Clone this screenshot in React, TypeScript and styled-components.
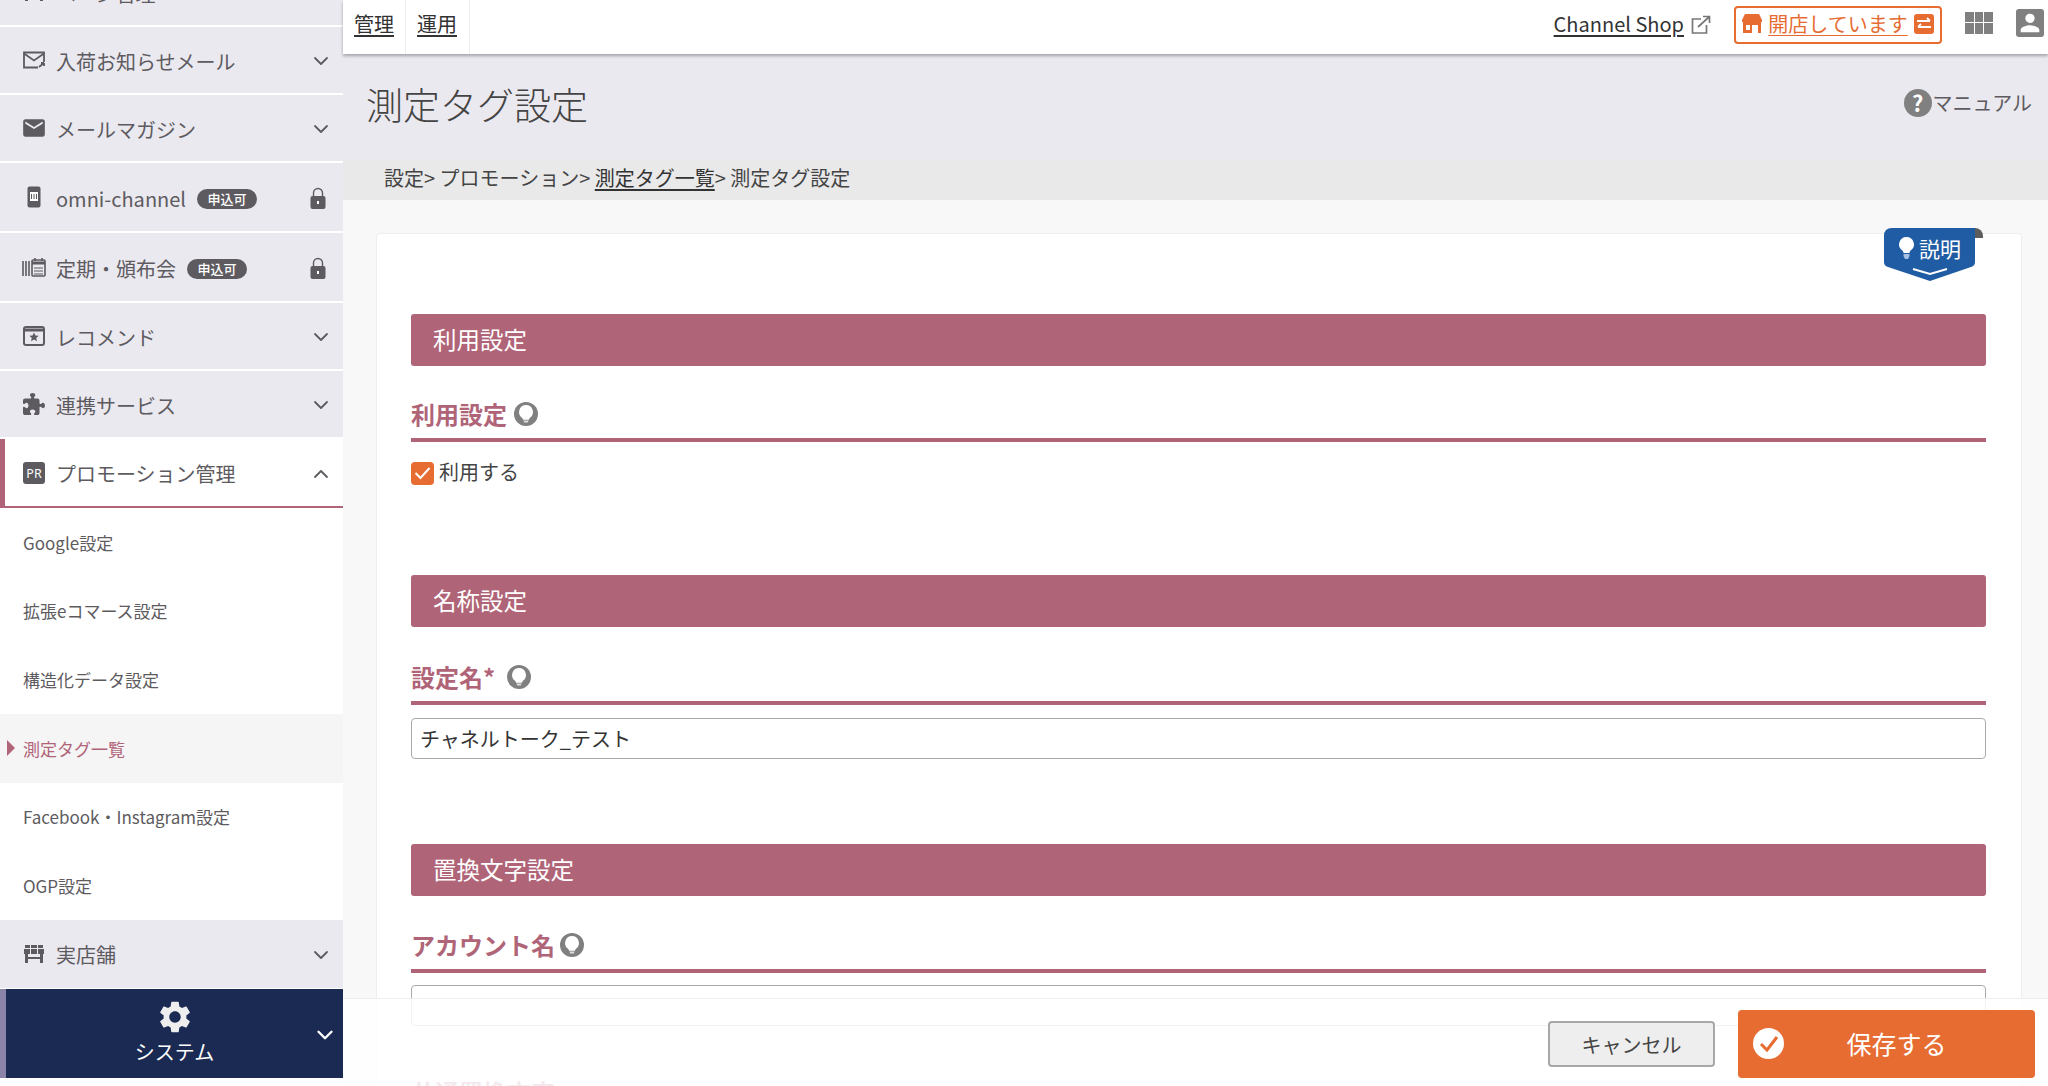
import { ReactNode } from "react";
import styled, { createGlobalStyle } from "styled-components";
import { ChevronDown, ChevronUp } from "lucide-react";
import { FaPuzzlePiece } from "react-icons/fa6";
import { MdEmail, MdPerson, MdSettings } from "react-icons/md";

const PINK = "#b06478";
const ORANGE = "#e66c32";
const GREY = "#5d5b60";
const LILAC = "#ebe9f0";

const GlobalStyle = createGlobalStyle`
	html, body {
		margin: 0;
		padding: 0;
		background: #fff;
		font-family: "Noto Sans CJK JP", "Noto Sans", sans-serif;
		color: #333;
	}
	* {
		box-sizing: border-box;
	}
`;

const Page = styled.div`
	position: relative;
	display: flex;
	height: 100vh;
	overflow: hidden;
`;

const Sidebar = styled.nav`
	flex: 0 0 343px;
	margin-top: -41px;
	display: flex;
	flex-direction: column;
`;

const MenuRow = styled.div<{ $h: number }>`
	height: ${(props) => props.$h}px;
	flex: none;
	display: flex;
	align-items: center;
	padding: 2px 10px 0 23px;
	background: ${LILAC};
	border-bottom: 2px solid #fff;
	color: ${GREY};
	font-size: 20px;
`;

const OpenRow = styled(MenuRow)`
	background: #fff;
	border-left: 5px solid ${PINK};
	border-bottom: 2px solid ${PINK};
	padding-left: 18px;
`;

const LastRow = styled(MenuRow)`
	border-bottom: none;
`;

const MenuIcon = styled.span`
	flex: 0 0 24px;
	min-width: 0;
	height: 24px;
	margin: -2px 10px 0 -1px;
	display: flex;
	align-items: center;
	justify-content: center;
	color: ${GREY};

	svg {
		flex: none;
	}
`;

const MenuLabel = styled.span`
	white-space: nowrap;
`;

const Badge = styled.span`
	margin: 1px 0 0 11px;
	width: 60px;
	height: 20px;
	border-radius: 10px;
	background: ${GREY};
	color: #fff;
	font-size: 13px;
	font-weight: 500;
	line-height: 20px;
	text-align: center;
	white-space: nowrap;
`;

const RowEnd = styled.span`
	margin-left: auto;
	display: flex;
	align-items: center;
	color: ${GREY};
`;

const LockSlot = styled(RowEnd)`
	margin-right: 7px;
`;

const SubItem = styled.div<{ $active?: boolean }>`
	position: relative;
	height: 68.67px;
	flex: none;
	display: flex;
	align-items: center;
	padding-left: 23px;
	font-size: 17px;
	white-space: nowrap;
	background: ${(props) => (props.$active ? "#f6f5f6" : "#fff")};
	color: ${(props) => (props.$active ? PINK : GREY)};

	${(props) => props.$active && `
		&::before {
			content: "";
			position: absolute;
			left: 7px;
			top: 26px;
			border-left: 8px solid ${PINK};
			border-top: 8px solid transparent;
			border-bottom: 8px solid transparent;
		}
	`}
`;

const SystemRow = styled.div`
	position: relative;
	height: 89px;
	flex: none;
	margin-top: 1px;
	background: #1b2a52;
	border-left: 6px solid #8b84a8;
	color: #fff;
	display: flex;
	flex-direction: column;
	align-items: center;
	padding-top: 9px;
	font-size: 20px;
	line-height: 32px;
`;

const SystemChevron = styled.span`
	position: absolute;
	right: 5px;
	top: 33px;
	display: flex;
`;

const Main = styled.div`
	flex: 1;
	min-width: 0;
	display: flex;
	flex-direction: column;
	background: #f8f8f8;
`;

const Header = styled.header`
	flex: none;
	height: 54px;
	display: flex;
	align-items: center;
	background: #fff;
	box-shadow: 0 2px 3px rgba(0, 0, 0, 0.3);
	position: relative;
	padding-right: 4px;
`;

const Tab = styled.a<{ $w: number }>`
	height: 54px;
	width: ${(props) => props.$w}px;
	padding: 0 0 8px 11px;
	display: flex;
	align-items: center;
	border-right: 1px solid #eee;
	color: #333;
	font-size: 20px;
	text-decoration: underline;
	text-underline-offset: 3px;
`;

const HeaderRight = styled.div`
	margin-left: auto;
	padding-bottom: 5px;
	display: flex;
	align-items: center;
`;

const ShopLink = styled.a`
	font-size: 20px;
	color: #333;
	text-decoration: underline;
	text-underline-offset: 3px;
	margin: -2px 7px 0 0;
`;

const OpenButton = styled.div`
	width: 208px;
	height: 38px;
	margin-left: 23px;
	padding-bottom: 2px;
	border: 2px solid ${ORANGE};
	border-radius: 4px;
	display: flex;
	align-items: center;
	justify-content: center;
	gap: 6px;
	color: ${ORANGE};
	font-size: 20px;
	white-space: nowrap;

	span {
		text-decoration: underline;
		text-decoration-thickness: 1px;
		text-underline-offset: 3px;
	}
`;

const GridIcon = styled.div`
	width: 28px;
	height: 22px;
	margin: -4px 0 0 23px;
	display: grid;
	grid-template-columns: repeat(3, 1fr);
	grid-template-rows: repeat(2, 1fr);
	gap: 1px;

	i {
		background: #808080;
	}
`;

const UserIcon = styled.div`
	width: 28px;
	height: 28px;
	margin: -4px 0 0 23px;
	background: #808080;
	border-radius: 3px;
	display: flex;
	align-items: center;
	justify-content: center;
	color: #fff;
`;

const TitleBar = styled.div`
	flex: none;
	height: 106px;
	background: ${LILAC};
	display: flex;
	align-items: center;
	justify-content: space-between;
	padding: 0 16px 7px 23px;
`;

const PageTitle = styled.h1`
	margin: 0;
	font-size: 37px;
	font-weight: 200;
	color: #444;
`;

const ManualLink = styled.div`
	display: flex;
	align-items: center;
	font-size: 20px;
	color: ${GREY};
	margin-top: -2px;
`;

const QuestionMark = styled.span`
	width: 28px;
	height: 28px;
	border-radius: 50%;
	background: #808080;
	color: #fff;
	font-size: 22px;
	font-weight: 700;
	line-height: 27px;
	text-align: center;
	margin-right: 1px;
`;

const Breadcrumb = styled.div`
	flex: none;
	height: 40px;
	background: #e9e9ea;
	padding: 0 0 5px 41px;
	display: flex;
	align-items: center;
	font-size: 20px;
	color: #444;
	white-space: pre;

	a {
		color: #333;
		text-decoration: underline;
		text-underline-offset: 3px;
	}
`;

const Content = styled.div`
	padding: 33px 26px 0 33px;
`;

const Card = styled.section`
	position: relative;
	background: #fff;
	border: 1px solid #eee;
	border-radius: 4px;
	padding: 80px 35px 0 34px;
`;

const HelpTab = styled.div`
	position: absolute;
	top: -6px;
	right: 46px;
	width: 91px;
	height: 53px;
	color: #fff;
	font-size: 21px;

	&::before {
		content: "";
		position: absolute;
		right: -8px;
		top: 0;
		width: 14px;
		height: 10px;
		border-radius: 0 8px 0 0;
		background: #5c5c5c;
	}
`;

const HelpShape = styled.svg`
	position: absolute;
	inset: 0;
`;

const HelpText = styled.div`
	position: relative;
	display: flex;
	align-items: center;
	gap: 5px;
	padding: 5px 0 0 15px;
	line-height: 30px;
`;

const SectionBar = styled.div<{ $mb: number }>`
	height: 52px;
	background: ${PINK};
	border-radius: 3px;
	color: #fff;
	font-size: 23.5px;
	line-height: 50px;
	padding-left: 22px;
	margin-bottom: ${(props) => props.$mb}px;
`;

const FieldTitle = styled.div<{ $gap: number }>`
	height: 38px;
	display: flex;
	align-items: center;
	gap: ${(props) => props.$gap}px;
	border-bottom: 4px solid ${PINK};
	box-sizing: content-box;
	padding-bottom: 5px;
	color: ${PINK};
	font-size: 24px;
	font-weight: 700;

	span {
		margin-top: -2px;
	}
`;

const CheckRow = styled.label`
	display: flex;
	align-items: center;
	gap: 5px;
	margin-top: 19px;
	margin-bottom: 90px;
	font-size: 20px;
	color: #444;
	height: 24px;

	span + span {
		margin-top: -4px;
	}
`;

const CheckBox = styled.span`
	width: 23px;
	height: 23px;
	border-radius: 4px;
	background: ${ORANGE};
	display: flex;
	align-items: center;
	justify-content: center;
`;

const TextField = styled.input<{ $mt: number; $mb: number }>`
	display: block;
	width: 100%;
	height: 41px;
	margin-top: ${(props) => props.$mt}px;
	margin-bottom: ${(props) => props.$mb}px;
	border: 1px solid #aaa;
	border-radius: 4px;
	padding: 0 8px;
	font: inherit;
	font-size: 20px;
	color: #333;
`;

const Footer = styled.div`
	position: absolute;
	left: 343px;
	right: 0;
	top: 998px;
	bottom: 0;
	background: rgba(255, 255, 255, 0.86);
	border-top: 1px solid #eee;
	display: flex;
	justify-content: flex-end;
	align-items: flex-start;
	gap: 23px;
	padding: 11px 13px 0 0;
`;

const CancelButton = styled.button`
	width: 167px;
	height: 46px;
	margin-top: 11px;
	border: 2px solid #a8a8a8;
	border-radius: 4px;
	background: #eee;
	color: #444;
	font: inherit;
	font-size: 20px;
`;

const SaveButton = styled.button`
	position: relative;
	width: 297px;
	height: 68px;
	border: none;
	border-radius: 4px;
	background: ${ORANGE};
	color: #fff;
	font: inherit;
	font-size: 25px;
	padding: 0 0 2px 20px;
`;

const SaveMark = styled.span`
	position: absolute;
	left: 15px;
	top: 18px;
	width: 31px;
	height: 31px;
	border-radius: 50%;
	background: #fff;
	display: flex;
	align-items: center;
	justify-content: center;
`;

const FadedHeading = styled.div`
	font-size: 24px;
	font-weight: 700;
	color: ${PINK};
`;

function Outline({ size = 24, children }: { size?: number; children: ReactNode }): JSX.Element {
	return <svg width={size} height={size} viewBox="0 0 24 24" fill="none" stroke="currentColor" strokeWidth={1.8}>{children}</svg>;
}

function BulbBadge(): JSX.Element {
	return (
		<svg width="24" height="24" viewBox="0 0 24 24">
			<circle cx="12" cy="12" r="12" fill="#808080" />
			<path d="M12 3a7 7 0 0 0-4 12.700c.7.6 1 1.200 1 2h6c0-.8.3-1.400 1-2A7 7 0 0 0 12 3z" fill="#fff" />
			<path d="M9.500 18.500h5l-.7 2h-3.600z" fill="#ddd" />
		</svg>
	);
}

function MailOutIcon(): JSX.Element {
	return (
		<Outline>
			<path d="M22 14V4.500H2v15h14" />
			<path d="M2 5.500l10 7 10-7" />
			<path d="M17 19l5-4m0 0h-3m3 0v3" />
		</Outline>
	);
}

function PhoneIcon(): JSX.Element {
	return (
		<svg width="14" height="22" viewBox="0 0 14 22">
			<rect x="0.5" y="0.5" width="13" height="21" rx="2" fill={GREY} />
			<rect x="3" y="6" width="8" height="9" fill="#fff" />
			<path d="M4.500 8v5M7 8v5M9.500 8v5" stroke={GREY} />
		</svg>
	);
}

function CalendarIcon(): JSX.Element {
	return (
		<svg width="24" height="20" viewBox="0 0 24 20">
			<path d="M1 4v15M4 4v15M7 4v15" stroke={GREY} strokeWidth="1.6" />
			<rect x="10" y="3" width="13" height="16" rx="1" fill="none" stroke={GREY} strokeWidth="1.6" />
			<path d="M10 6h13" stroke={GREY} strokeWidth="3" />
			<path d="M13 1v3M20 1v3" stroke={GREY} strokeWidth="1.6" />
			<path d="M12 11h9M12 14h9M12 17h9" stroke={GREY} />
		</svg>
	);
}

function StarBoxIcon(): JSX.Element {
	return (
		<svg width="22" height="20" viewBox="0 0 22 20">
			<rect x="1" y="1" width="20" height="18" rx="2" fill="none" stroke={GREY} strokeWidth="2" />
			<path d="M1 4h20" stroke={GREY} strokeWidth="3" />
			<path d="M11 6.500l1.400 3 3.300.3-2.500 2.200.8 3.200-3-1.700-3 1.700.8-3.200-2.500-2.200 3.300-.3z" fill={GREY} />
		</svg>
	);
}

function PrIcon(): JSX.Element {
	return (
		<svg width="22" height="22" viewBox="0 0 22 22">
			<rect width="22" height="22" rx="3" fill={GREY} />
			<text x="11" y="16" textAnchor="middle" fill="#fff" fontSize="12.5" fontFamily="Noto Sans, sans-serif">PR</text>
		</svg>
	);
}

function ShopIcon(): JSX.Element {
	return (
		<svg width="22" height="20" viewBox="0 0 22 20" fill={GREY}>
			<path d="M2 1h18v3H2zM1 5h20v5H1z" />
			<path d="M7.500 1v9M14.500 1v9" stroke={LILAC} strokeWidth="1" />
			<path d="M2 10h3v9H2zM17 10h3v9h-3zM5 13h12v2H5z" />
		</svg>
	);
}

function LockIcon(): JSX.Element {
	return (
		<svg width="16" height="22" viewBox="0 0 16 22">
			<path d="M3.500 10V6a4.500 4.500 0 0 1 9 0v4" fill="none" stroke={GREY} strokeWidth="1.400" />
			<rect x="0.500" y="9" width="15" height="13" rx="2" fill={GREY} />
			<rect x="7" y="14" width="2" height="3" fill="#fff" />
		</svg>
	);
}

function OrangeStoreIcon(): JSX.Element {
	return (
		<svg width="20" height="19" viewBox="0 0 20 19" fill={ORANGE}>
			<path d="M3 0h14l3 6v2H0V6z" />
			<path d="M1 8h18v11h-3V11H10v8H1zM4 11v5h4v-5z" fillRule="evenodd" />
		</svg>
	);
}

function ExternalIcon(): JSX.Element {
	return (
		<svg width="20" height="20" viewBox="0 0 20 20" fill="none" stroke="#777" strokeWidth="1.7">
			<path d="M10 4H1.500v14h14v-8" />
			<path d="M7 12L18 2M12 1.500h6.500V8" />
		</svg>
	);
}

function SwapIcon(): JSX.Element {
	return (
		<svg width="20" height="20" viewBox="0 0 20 20">
			<rect width="20" height="20" rx="3" fill={ORANGE} />
			<path d="M3 7h13M13 4l3 3M17 13H4M7 10l-3 3" stroke="#fff" strokeWidth="1.800" fill="none" />
		</svg>
	);
}

function Chevron(): JSX.Element {
	return <ChevronDown size={24} strokeWidth={1.8} />;
}

function LockEnd(): JSX.Element {
	return <LockSlot><LockIcon /></LockSlot>;
}

const SUB_ITEMS = ["Google設定", "拡張eコマース設定", "構造化データ設定", "測定タグ一覧", "Facebook・Instagram設定", "OGP設定"];

function Navigation(): JSX.Element {
	return (
		<Sidebar>
			<MenuRow $h={68}><MenuIcon><ShopIcon /></MenuIcon><MenuLabel>ページ管理</MenuLabel></MenuRow>
			<MenuRow $h={68}><MenuIcon><MailOutIcon /></MenuIcon><MenuLabel>入荷お知らせメール</MenuLabel><RowEnd><Chevron /></RowEnd></MenuRow>
			<MenuRow $h={68}><MenuIcon><MdEmail size={26} /></MenuIcon><MenuLabel>メールマガジン</MenuLabel><RowEnd><Chevron /></RowEnd></MenuRow>
			<MenuRow $h={70}><MenuIcon><PhoneIcon /></MenuIcon><MenuLabel>omni-channel</MenuLabel><Badge>申込可</Badge><LockEnd /></MenuRow>
			<MenuRow $h={70}><MenuIcon><CalendarIcon /></MenuIcon><MenuLabel>定期・頒布会</MenuLabel><Badge>申込可</Badge><LockEnd /></MenuRow>
			<MenuRow $h={68}><MenuIcon><StarBoxIcon /></MenuIcon><MenuLabel>レコメンド</MenuLabel><RowEnd><Chevron /></RowEnd></MenuRow>
			<MenuRow $h={68}><MenuIcon><FaPuzzlePiece size={22} /></MenuIcon><MenuLabel>連携サービス</MenuLabel><RowEnd><Chevron /></RowEnd></MenuRow>
			<OpenRow $h={69}><MenuIcon><PrIcon /></MenuIcon><MenuLabel>プロモーション管理</MenuLabel><RowEnd><ChevronUp size={24} strokeWidth={1.8} /></RowEnd></OpenRow>
			{SUB_ITEMS.map((item) => <SubItem key={item} $active={item === "測定タグ一覧"}>{item}</SubItem>)}
			<LastRow $h={68}><MenuIcon><ShopIcon /></MenuIcon><MenuLabel>実店舗</MenuLabel><RowEnd><Chevron /></RowEnd></LastRow>
			<SystemRow>
				<MdSettings size={38} color="#eee" />
				システム
				<SystemChevron><ChevronDown size={26} strokeWidth={2.2} /></SystemChevron>
			</SystemRow>
		</Sidebar>
	);
}

export default function App(): JSX.Element {
	return (
		<Page>
			<GlobalStyle />
			<Navigation />
			<Main>
				<Header>
					<Tab $w={63}>管理</Tab>
					<Tab $w={64}>運用</Tab>
					<HeaderRight>
						<ShopLink>Channel Shop</ShopLink>
						<ExternalIcon />
						<OpenButton>
							<OrangeStoreIcon />
							<span>開店しています</span>
							<SwapIcon />
						</OpenButton>
						<GridIcon>{[0, 1, 2, 3, 4, 5].map((n) => <i key={n} />)}</GridIcon>
						<UserIcon><MdPerson size={28} /></UserIcon>
					</HeaderRight>
				</Header>
				<TitleBar>
					<PageTitle>測定タグ設定</PageTitle>
					<ManualLink><QuestionMark>?</QuestionMark>マニュアル</ManualLink>
				</TitleBar>
				<Breadcrumb>設定&gt; プロモーション&gt; <a>測定タグ一覧</a>&gt; 測定タグ設定</Breadcrumb>
				<Content>
					<Card>
						<HelpTab>
							<HelpShape width="91" height="53" viewBox="0 0 91 53">
								<path d="M8 0h83v34q0 4-4 5L46 53 4 39q-4-1-4-5V8q0-8 8-8z" fill="#1f5ca3" />
								<path d="M29 41l17 5 17-5" stroke="#fff" strokeWidth="2" fill="none" />
							</HelpShape>
							<HelpText>
								<svg width="15" height="22" viewBox="0 0 15 22">
									<path d="M7.500 0a7.500 7.500 0 0 0-4 13.800c.7.6 1 1.200 1 2.200h6c0-1 .3-1.600 1-2.200A7.500 7.500 0 0 0 7.500 0z" fill="#fff" />
									<path d="M4.500 17h6v2l-1.500 3h-3l-1.500-3z" fill="#a9c1e0" />
								</svg>
								説明
							</HelpText>
						</HelpTab>
						<SectionBar $mb={29}>利用設定</SectionBar>
						<FieldTitle $gap={7}><span>利用設定</span><BulbBadge /></FieldTitle>
						<CheckRow>
							<CheckBox>
								<svg width="17" height="14" viewBox="0 0 17 14"><path d="M1.500 7l5 5 9-10" stroke="#fff" strokeWidth="2" fill="none" /></svg>
							</CheckBox>
							<span>利用する</span>
						</CheckRow>
						<SectionBar $mb={31}>名称設定</SectionBar>
						<FieldTitle $gap={12}><span>設定名*</span><BulbBadge /></FieldTitle>
						<TextField $mt={13} $mb={85} defaultValue="チャネルトーク_テスト" />
						<SectionBar $mb={30}>置換文字設定</SectionBar>
						<FieldTitle $gap={5}><span>アカウント名</span><BulbBadge /></FieldTitle>
						<TextField $mt={12} $mb={48} />
						<FadedHeading>共通置換文字</FadedHeading>
					</Card>
				</Content>
			</Main>
			<Footer>
				<CancelButton>キャンセル</CancelButton>
				<SaveButton>
					<SaveMark>
						<svg width="20" height="17" viewBox="0 0 20 17"><path d="M2 9l6 6L18 2" stroke={ORANGE} strokeWidth="3" fill="none" /></svg>
					</SaveMark>
					保存する
				</SaveButton>
			</Footer>
		</Page>
	);
}
